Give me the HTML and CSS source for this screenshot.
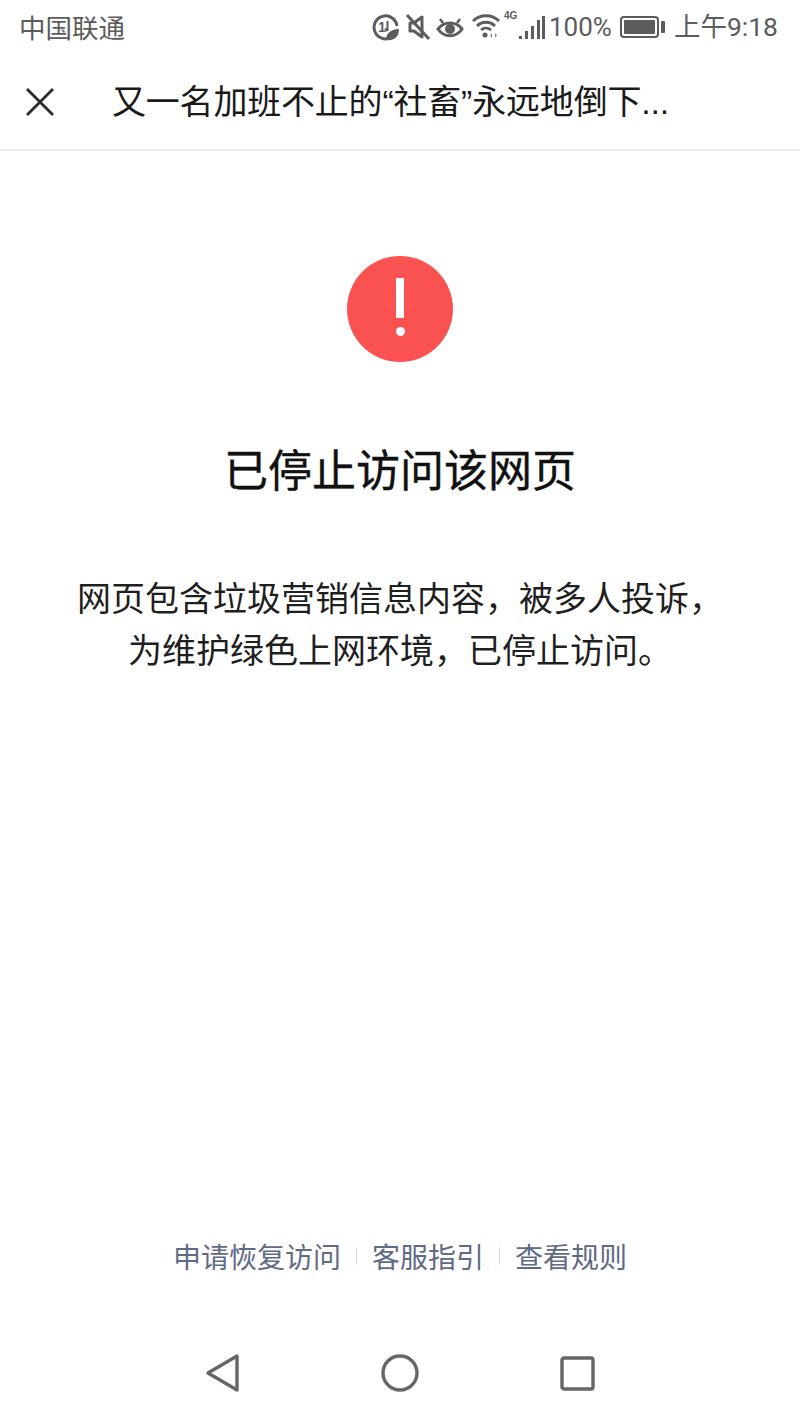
FILE: index.html
```html
<!DOCTYPE html>
<html lang="zh-CN">
<head>
<meta charset="utf-8">
<title>已停止访问该网页</title>
<link rel="stylesheet" href="styles.css">
</head>
<body>
<div class="page">
  <header class="status">
    <span class="carrier">中国联通</span>
    <div class="status-right">
      <svg class="ic ic-data" viewBox="0 0 28 28" width="28" height="28"><path d="M20 24.500A11.500 11.500 0 1 1 26 13" fill="none" stroke="#5c5c5c" stroke-width="3"/><text x="7" y="19" class="ic-text">1</text><path d="M16.500 8v10m0 0l-2.500-2.500" stroke="#5c5c5c" stroke-width="2" fill="none"/><path d="M15 27c0-7 5-11 13-11 0 7-4 12-13 11z" fill="#5c5c5c"/></svg>
      <svg class="ic ic-mute" viewBox="0 0 26 28" width="26" height="28"><path d="M5 10h4l8-6v20l-8-6H5z" fill="none" stroke="#5c5c5c" stroke-width="3" stroke-linejoin="round"/><path d="M2 2l22 24" stroke="#5c5c5c" stroke-width="3"/></svg>
      <svg class="ic ic-eye" viewBox="0 0 28 26" width="28" height="26"><path d="M2 15c6-8 18-8 24 0-6 9-18 9-24 0z" fill="none" stroke="#5c5c5c" stroke-width="3"/><circle cx="14" cy="15" r="5" fill="#5c5c5c"/><path d="M4 5l3 4M24 5l-3 4" stroke="#5c5c5c" stroke-width="2.500"/></svg>
      <svg class="ic ic-wifi" viewBox="0 0 30 26" width="30" height="26"><path d="M2 9c7-7 19-7 26 0M6 14c5-5 13-5 18 0M10 18c3-2.500 7-2.500 10 0" fill="none" stroke="#5c5c5c" stroke-width="2.800"/><circle cx="14" cy="23" r="2.500" fill="#5c5c5c"/><path d="M21 21v5l-2-2.500zM24 21v5l2-2.500z" fill="#8a8a8a"/></svg>
      <div class="signal">
        <span class="net">4G</span>
        <svg viewBox="0 0 26 26" width="26" height="26"><rect x="0" y="21" width="3" height="3" fill="#5c5c5c"/><rect x="6" y="16" width="3" height="8" fill="#5c5c5c"/><rect x="12" y="11" width="3" height="13" fill="#5c5c5c"/><rect x="18" y="5" width="3" height="19" fill="#5c5c5c"/><rect x="23" y="1" width="3" height="23" fill="#5c5c5c"/></svg>
      </div>
      <span class="pct">100%</span>
      <div class="battery"><div class="battery-body"><div class="battery-fill"></div></div><div class="battery-tip"></div></div>
      <span class="clock">上午9:18</span>
    </div>
  </header>

  <nav class="nav">
    <svg class="close" viewBox="0 0 30 30" width="30" height="30"><path d="M2 2l26 26M28 2L2 28" stroke="#2a2a2a" stroke-width="2.800" fill="none"/></svg>
    <h1 class="nav-title">又一名加班不止的“社畜”永远地倒下...</h1>
  </nav>

  <main class="main">
    <div class="alert">
      <span class="alert-bar"></span>
      <span class="alert-dot"></span>
    </div>
    <h2 class="heading">已停止访问该网页</h2>
    <p class="msg">网页包含垃圾营销信息内容，被多人投诉，<br>为维护绿色上网环境，已停止访问。</p>
  </main>

  <div class="links">
    <a class="link">申请恢复访问</a>
    <span class="sep"></span>
    <a class="link">客服指引</a>
    <span class="sep"></span>
    <a class="link">查看规则</a>
  </div>

  <footer class="softkeys">
    <svg viewBox="0 0 36 40" width="36" height="40"><path d="M32 3v34L3 20z" fill="none" stroke="#666" stroke-width="3.400" stroke-linejoin="round"/></svg>
    <svg viewBox="0 0 38 38" width="38" height="38"><circle cx="19" cy="19" r="17" fill="none" stroke="#666" stroke-width="3.400"/></svg>
    <svg viewBox="0 0 36 36" width="36" height="36"><rect x="3" y="3" width="31" height="31" rx="2" fill="none" stroke="#666" stroke-width="3.400"/></svg>
  </footer>
</div>
</body>
</html>
```

FILE: styles.css
```css
* { box-sizing: border-box; }
html, body { margin: 0; padding: 0; background: #fff; }
body { font-family: "Noto Sans CJK SC", "Liberation Sans", sans-serif; }

.page {
  width: 800px;
  height: 1422px;
  display: flex;
  flex-direction: column;
  overflow: hidden;
  background: #fff;
}

.status {
  height: 56px;
  padding: 0 22px 2px 19px;
  display: flex;
  align-items: center;
  justify-content: space-between;
  color: #5c5c5c;
  font-size: 26.500px;
}
.carrier { line-height: 1; }
.status-right { display: flex; align-items: center; }
.ic { display: block; }
.ic-data { margin-right: 6px; }
.ic-mute { margin-right: 5px; }
.ic-eye { margin-right: 7px; }
.ic-wifi { margin-top: -4px; }
.ic-text { font: 700 14px "Liberation Sans", sans-serif; fill: #5c5c5c; }
.signal { position: relative; width: 28px; height: 28px; margin: 0 4px 0 16px; display: flex; align-items: flex-end; justify-content: flex-end; }
.signal svg { display: block; }
.net { position: absolute; left: -13px; top: -2px; font: 700 10px/1 "Liberation Sans", sans-serif; color: #5c5c5c; }
.pct { font-family: "Roboto", sans-serif; font-size: 26px; line-height: 1; margin-right: 8px; }
.battery { display: flex; align-items: center; margin-right: 9px; }
.battery-body { width: 39px; height: 22px; border: 2px solid #5c5c5c; border-radius: 4px; padding: 2px; }
.battery-fill { width: 100%; height: 100%; background: #5c5c5c; border-radius: 1px; }
.battery-tip { width: 4px; height: 12px; margin-left: 2px; background: #5c5c5c; border-radius: 1px; }
.clock { font-family: "Roboto", "Noto Sans CJK SC", sans-serif; font-size: 26.500px; line-height: 1; }

.nav {
  height: 95px;
  display: flex;
  align-items: center;
  padding: 0 0 0 25px;
  border-bottom: 2px solid #ececec;
}
.close { display: block; flex: none; margin-right: 57px; margin-top: -2px; }
.nav-title {
  margin: -2px 0 0;
  font-family: "Liberation Sans", "Noto Sans CJK SC", sans-serif;
  font-size: 34px;
  font-weight: 400;
  line-height: 48px;
  letter-spacing: -0.200px;
  color: #1a1a1a;
  white-space: nowrap;
}

.main {
  display: flex;
  flex-direction: column;
  align-items: center;
  padding-top: 105px;
  flex: 1;
}
.alert {
  width: 106px;
  height: 106px;
  border-radius: 50%;
  background: #fa5151;
  display: flex;
  flex-direction: column;
  align-items: center;
  padding-top: 22px;
}
.alert-bar { width: 8px; height: 40px; background: #fff; }
.alert-dot { width: 9px; height: 9px; margin-top: 9px; border-radius: 50%; background: #fff; }
.heading {
  margin: 76px 0 0;
  font-size: 44px;
  font-weight: 400;
  line-height: 60px;
  color: #111;
  -webkit-text-stroke: 0.4px #111;
}
.msg {
  margin: 73px 0 0;
  font-size: 34px;
  line-height: 52px;
  text-align: center;
  color: #1f1f1f;
  white-space: nowrap;
}

.links {
  display: flex;
  justify-content: center;
  align-items: center;
  height: 40px;
  margin-bottom: 62px;
}
.link { font-size: 28px; line-height: 40px; color: #5f6b85; }
.sep { width: 1px; height: 18px; margin: 0 15px; background: #dcdcdc; }

.softkeys {
  height: 70px;
  padding: 0 205px;
  display: flex;
  justify-content: space-between;
  align-items: center;
  margin-bottom: 14px;
}
.softkeys svg { display: block; }
```
